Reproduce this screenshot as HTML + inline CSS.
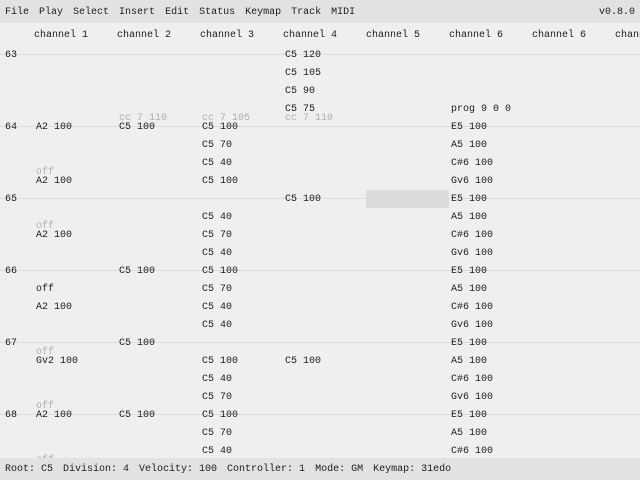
<!DOCTYPE html>
<html><head><meta charset="utf-8"><style>
*{margin:0;padding:0;box-sizing:border-box}
body{width:640px;height:480px;overflow:hidden;background:#efefef;font-family:"Liberation Mono",monospace;font-size:10px;color:#1c1c1c;position:relative}
.t{position:absolute;line-height:12px;white-space:pre;margin-top:2px}
.t span{margin-right:10px}
.f{color:#b0b0b0}
.l{position:absolute;left:0;width:640px;height:1px;background:#dcdcdc}
#menu{position:absolute;left:0;top:0;width:640px;height:23px;background:#e2e2e2}
#status{position:absolute;left:0;top:458px;width:640px;height:22px;background:#e2e2e2}
</style></head><body>
<div id="menu"></div>
<div class="t" style="left:5px;top:5px"><span>File</span><span>Play</span><span>Select</span><span>Insert</span><span>Edit</span><span>Status</span><span>Keymap</span><span>Track</span><span>MIDI</span></div>
<div class="t" style="left:599px;top:5px">v0.8.0</div>
<div class="t" style="left:34px;top:28px">channel 1</div>
<div class="t" style="left:117px;top:28px">channel 2</div>
<div class="t" style="left:200px;top:28px">channel 3</div>
<div class="t" style="left:283px;top:28px">channel 4</div>
<div class="t" style="left:366px;top:28px">channel 5</div>
<div class="t" style="left:449px;top:28px">channel 6</div>
<div class="t" style="left:532px;top:28px">channel 6</div>
<div class="t" style="left:615px;top:28px">channel 7</div>
<div style="position:absolute;left:366px;top:190px;width:83px;height:18px;background:#dcdcdc"></div>
<div class="l" style="top:54px"></div><div class="l" style="top:126px"></div><div class="l" style="top:198px"></div><div class="l" style="top:270px"></div><div class="l" style="top:342px"></div><div class="l" style="top:414px"></div>
<div class="t" style="left:5px;top:48px">63</div>
<div class="t" style="left:5px;top:120px">64</div>
<div class="t" style="left:5px;top:192px">65</div>
<div class="t" style="left:5px;top:264px">66</div>
<div class="t" style="left:5px;top:336px">67</div>
<div class="t" style="left:5px;top:408px">68</div>
<!-- col1 -->
<div class="t" style="left:36px;top:120px">A2 100</div>
<div class="t f" style="left:36px;top:165px">off</div>
<div class="t" style="left:36px;top:174px">A2 100</div>
<div class="t f" style="left:36px;top:219px">off</div>
<div class="t" style="left:36px;top:228px">A2 100</div>
<div class="t" style="left:36px;top:282px">off</div>
<div class="t" style="left:36px;top:300px">A2 100</div>
<div class="t f" style="left:36px;top:345px">off</div>
<div class="t" style="left:36px;top:354px">Gv2 100</div>
<div class="t f" style="left:36px;top:399px">off</div>
<div class="t" style="left:36px;top:408px">A2 100</div>
<div class="t f" style="left:36px;top:453px">off</div>
<!-- col2 -->
<div class="t f" style="left:119px;top:111px">cc 7 110</div>
<div class="t" style="left:119px;top:120px">C5 100</div>
<div class="t" style="left:119px;top:264px">C5 100</div>
<div class="t" style="left:119px;top:336px">C5 100</div>
<div class="t" style="left:119px;top:408px">C5 100</div>
<!-- col3 -->
<div class="t f" style="left:202px;top:111px">cc 7 105</div>
<div class="t" style="left:202px;top:120px">C5 100</div>
<div class="t" style="left:202px;top:138px">C5 70</div>
<div class="t" style="left:202px;top:156px">C5 40</div>
<div class="t" style="left:202px;top:174px">C5 100</div>
<div class="t" style="left:202px;top:210px">C5 40</div>
<div class="t" style="left:202px;top:228px">C5 70</div>
<div class="t" style="left:202px;top:246px">C5 40</div>
<div class="t" style="left:202px;top:264px">C5 100</div>
<div class="t" style="left:202px;top:282px">C5 70</div>
<div class="t" style="left:202px;top:300px">C5 40</div>
<div class="t" style="left:202px;top:318px">C5 40</div>
<div class="t" style="left:202px;top:354px">C5 100</div>
<div class="t" style="left:202px;top:372px">C5 40</div>
<div class="t" style="left:202px;top:390px">C5 70</div>
<div class="t" style="left:202px;top:408px">C5 100</div>
<div class="t" style="left:202px;top:426px">C5 70</div>
<div class="t" style="left:202px;top:444px">C5 40</div>
<!-- col4 -->
<div class="t" style="left:285px;top:48px">C5 120</div>
<div class="t" style="left:285px;top:66px">C5 105</div>
<div class="t" style="left:285px;top:84px">C5 90</div>
<div class="t" style="left:285px;top:102px">C5 75</div>
<div class="t f" style="left:285px;top:111px">cc 7 110</div>
<div class="t" style="left:285px;top:192px">C5 100</div>
<div class="t" style="left:285px;top:354px">C5 100</div>
<!-- col6 -->
<div class="t" style="left:451px;top:102px">prog 9 0 0</div>
<div class="t" style="left:451px;top:120px">E5 100</div>
<div class="t" style="left:451px;top:138px">A5 100</div>
<div class="t" style="left:451px;top:156px">C#6 100</div>
<div class="t" style="left:451px;top:174px">Gv6 100</div>
<div class="t" style="left:451px;top:192px">E5 100</div>
<div class="t" style="left:451px;top:210px">A5 100</div>
<div class="t" style="left:451px;top:228px">C#6 100</div>
<div class="t" style="left:451px;top:246px">Gv6 100</div>
<div class="t" style="left:451px;top:264px">E5 100</div>
<div class="t" style="left:451px;top:282px">A5 100</div>
<div class="t" style="left:451px;top:300px">C#6 100</div>
<div class="t" style="left:451px;top:318px">Gv6 100</div>
<div class="t" style="left:451px;top:336px">E5 100</div>
<div class="t" style="left:451px;top:354px">A5 100</div>
<div class="t" style="left:451px;top:372px">C#6 100</div>
<div class="t" style="left:451px;top:390px">Gv6 100</div>
<div class="t" style="left:451px;top:408px">E5 100</div>
<div class="t" style="left:451px;top:426px">A5 100</div>
<div class="t" style="left:451px;top:444px">C#6 100</div>
<div id="status"></div>
<div class="t" style="left:5px;top:462px"><span>Root: C5</span><span>Division: 4</span><span>Velocity: 100</span><span>Controller: 1</span><span>Mode: GM</span><span>Keymap: 31edo</span></div>
</body></html>
